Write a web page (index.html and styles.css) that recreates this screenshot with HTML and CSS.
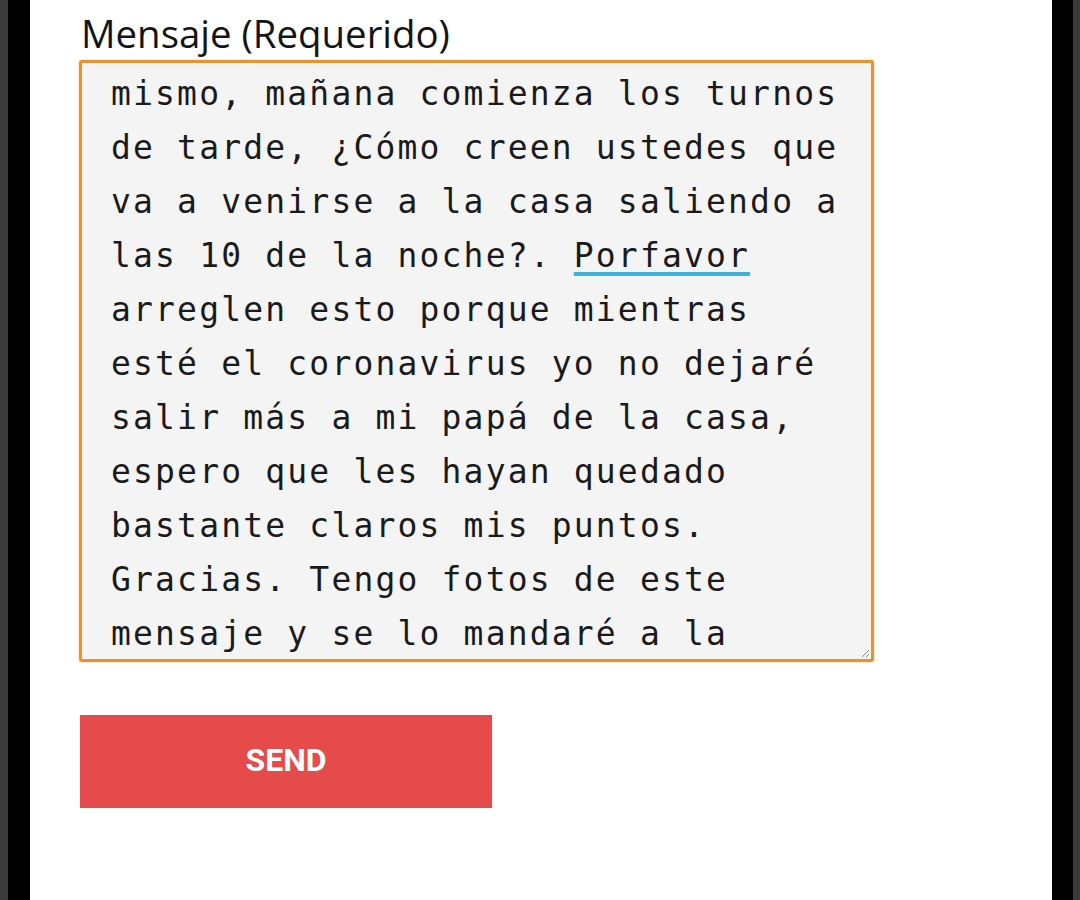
FILE: index.html
```html
<!DOCTYPE html>
<html lang="es">
<head>
<meta charset="utf-8">
<title>Mensaje</title>
<link rel="stylesheet" href="styles.css">
</head>
<body>
<div class="bezel bezel-gray-l"></div>
<div class="bezel bezel-black-l"></div>
<main class="page">
  <label class="field-label">Mensaje (Requerido)</label>
  <div class="textarea">
    <div class="line">mismo, mañana comienza los turnos</div>
    <div class="line">de tarde, ¿Cómo creen ustedes que</div>
    <div class="line">va a venirse a la casa saliendo a</div>
    <div class="line">las 10 de la noche?. <span class="spell">Porfavor</span></div>
    <div class="line">arreglen esto porque mientras</div>
    <div class="line">esté el coronavirus yo no dejaré</div>
    <div class="line">salir más a mi papá de la casa,</div>
    <div class="line">espero que les hayan quedado</div>
    <div class="line">bastante claros mis puntos.</div>
    <div class="line">Gracias. Tengo fotos de este</div>
    <div class="line">mensaje y se lo mandaré a la</div>
    <svg class="grip" width="10" height="10" viewBox="0 0 10 10"><path d="M9 2 L2 9 M9 6 L6 9" stroke="#8a8a8a" stroke-width="1" fill="none"/></svg>
  </div>
  <button class="send">SEND</button>
</main>
<div class="bezel bezel-black-r"></div>
<div class="bezel bezel-gray-r"></div>
</body>
</html>
```

FILE: styles.css
```css
html, body {
  margin: 0;
  padding: 0;
  height: 900px;
  overflow: hidden;
}
body {
  display: flex;
  background: #fff;
}
.bezel { flex: none; height: 900px; }
.bezel-gray-l { width: 8px; background: #3b3b3b; }
.bezel-black-l { width: 22px; background: #000; }
.bezel-black-r { width: 21px; background: #000; }
.bezel-gray-r { width: 7px; background: #3b3b3b; }

.page {
  flex: 1;
  background: #fff;
  padding: 13px 0 0 49px;
  display: flex;
  flex-direction: column;
  align-items: flex-start;
}
.field-label {
  font-family: "Open Sans", "Noto Sans", sans-serif;
  font-size: 38.4px;
  line-height: 40px;
  color: #141414;
  margin-left: 2px;
}
.textarea {
  position: relative;
  margin-top: 7px;
  width: 795px;
  height: 602px;
  box-sizing: border-box;
  border: 3px solid #e8932c;
  border-radius: 3px;
  box-shadow: 0 0 2px rgba(240, 170, 90, 0.7);
  background: #f4f4f4;
  padding: 4px 0 0 29px;
  overflow: hidden;
  font-family: "DejaVu Sans Mono", monospace;
  font-size: 33px;
  letter-spacing: 2.17px;
  line-height: 54px;
  color: #1a1a1a;
}
.line {
  white-space: pre;
}
.spell {
  text-decoration: underline;
  text-decoration-color: #42b2d8;
  text-decoration-thickness: 4px;
  text-underline-offset: 5px;
}
.grip {
  position: absolute;
  right: 1px;
  bottom: 1px;
}
.send {
  margin-top: 53px;
  margin-left: 1px;
  width: 412px;
  height: 93px;
  border: none;
  border-radius: 0;
  background: #e54b4a;
  color: #fff;
  font-family: Roboto, "Liberation Sans", sans-serif;
  font-weight: 700;
  font-size: 32px;
  padding: 0 0 4px 0;
}
```
